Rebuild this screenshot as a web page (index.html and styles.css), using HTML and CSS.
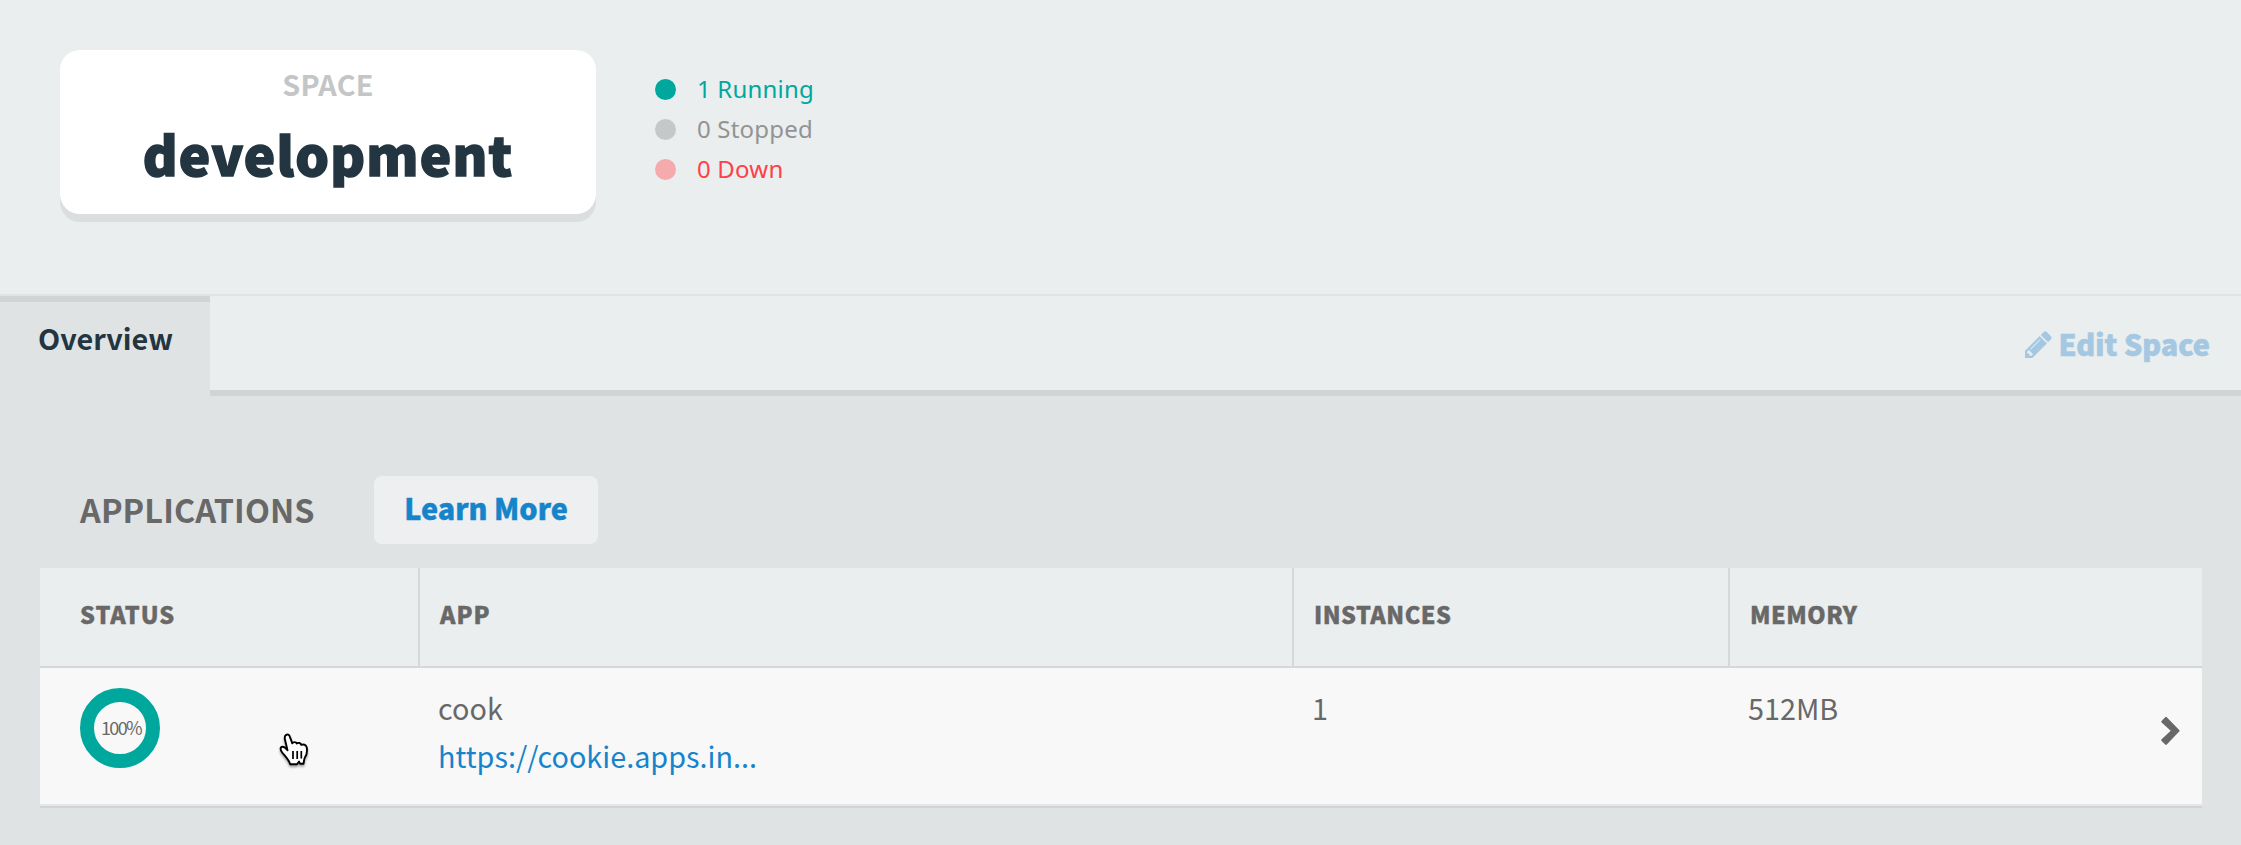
FILE: index.html
```html
<!DOCTYPE html>
<html lang="en">
<head>
<meta charset="utf-8">
<title>development</title>
<link rel="stylesheet" href="styles.css">
</head>
<body>
<header class="space-header">
  <div class="space-card">
    <span class="space-label">SPACE</span>
    <h1 class="space-name">development</h1>
  </div>
  <ul class="status-list">
    <li class="status running"><i class="dot"></i><span>1 Running</span></li>
    <li class="status stopped"><i class="dot"></i><span>0 Stopped</span></li>
    <li class="status down"><i class="dot"></i><span>0 Down</span></li>
  </ul>
</header>
<nav class="tabs">
  <a class="tab">Overview</a>
  <div class="tab-rest">
    <a class="edit"><svg class="pencil" viewBox="0 0 1536 1536"><path fill="currentColor" d="M363 1408l91-91-235-235-91 91v107h128v128h107zM886 480q0-22-22-22-10 0-17 7l-542 542q-7 7-7 17 0 22 22 22 10 0 17-7l542-542q7-7 7-17zM832 288l416 416-832 832H0v-416zM1515 384q0 53-37 90l-166 166-416-416 166-165q36-38 90-38 53 0 91 38l235 234q37 39 37 91z"/></svg><span>Edit Space</span></a>
  </div>
</nav>
<main class="content">
  <div class="section-head">
    <h2 class="section-title">APPLICATIONS</h2>
    <a class="learn"><span>Learn More</span></a>
  </div>
  <div class="table">
    <div class="row head">
      <div class="th th-status">STATUS</div>
      <div class="th th-app">APP</div>
      <div class="th th-inst">INSTANCES</div>
      <div class="th th-mem">MEMORY</div>
    </div>
    <div class="row body">
      <div class="td td-status"><div class="ring"><span>100%</span></div></div>
      <div class="td td-app"><span class="app-name">cook</span><a class="app-url">https://cookie.apps.in...</a></div>
      <div class="td td-inst">1</div>
      <div class="td td-mem">512MB</div>
      <svg class="chevron" viewBox="0 0 19 30"><path fill="currentColor" d="M.6 4.9 4.2 1.2Q5 .4 5.8 1.2L18.2 13.9Q19 14.700 18.200 15.500L5.800 28.500Q5 29.300 4.200 28.500L.6 24.900Q-.2 24.100.6 23.300L9.700 14.700.6 6.500Q-.2 5.700.6 4.900Z"/></svg>
    </div>
  </div>
</main>
<svg class="cursor" viewBox="0 0 32 36"><path d="M7.700 3.300C9.500 1.900 11.300 2.600 11.900 4.800L14.300 11.300C15.500 9.600 18 9.700 18.800 11.500 20.500 10.300 22.800 10.900 23.300 12.900 25.300 12 28 12.600 28.700 15.300 29.500 19.500 28.600 23 26.900 25.500 25.900 27 26 30 25.500 31.800H22.200L21 29.600 19 32.300H12.200C11 28 7 24 4.200 20.500 1.900 17.600 2.100 14.700 4.600 14.700 6.700 14.700 8 16.300 9.500 18.200L7.200 8.500C6.500 6 6.200 4.500 7.700 3.300Z" fill="#fff" stroke="#000" stroke-width="1.900" stroke-linejoin="round"/><path d="M15 19v8M19.200 19v8M23.300 19v7.500" stroke="#000" stroke-width="1.700"/></svg>
</body>
</html>
```
FILE: styles.css
```css
* { box-sizing: border-box; }
body {
  margin: 0;
  width: 2241px;
  height: 845px;
  overflow: hidden;
  background: #dfe3e4;
  color: #686868;
  font-family: "Noto Sans CJK SC", "Noto Sans", sans-serif;
  font-size: 28.8px;
}
h1, h2, ul { margin: 0; padding: 0; }
.space-header {
  display: flex;
  height: 296px;
  padding: 50px 60px 0;
  background: #eaeeef;
  border-bottom: 2px solid #dfe3e4;
}
.space-card {
  display: flex;
  flex-direction: column;
  align-items: center;
  width: 536px;
  height: 164px;
  border-radius: 20px;
  background: #fff;
  box-shadow: 0 8px 0 #dadedf;
}
.space-label {
  margin-top: 14px;
  line-height: 40px;
  font-weight: 700;
  letter-spacing: .2px;
  color: #c4c5c7;
}
.space-name {
  line-height: 64px;
  margin-top: 17px;
  font-size: 53px;
  font-weight: 900;
  letter-spacing: 1.150px;
  -webkit-text-stroke: 1.500px currentColor;
  color: #233540;
}
.status-list {
  display: flex;
  flex-direction: column;
  list-style: none;
  margin: 19px 0 0 59px;
  font-family: "Noto Sans", sans-serif;
  font-size: 24px;
  letter-spacing: .2px;
}
.status { display: flex; align-items: center; gap: 21px; height: 40px; line-height: 40px; }
.dot { width: 21px; height: 21px; border-radius: 50%; }
.running { color: #00a79d; }
.running .dot { background: #00a79d; }
.stopped { color: #939393; }
.stopped .dot { background: #c4c8c9; }
.down { color: #ff4048; }
.down .dot { background: #f5abad; }
.tabs { display: flex; height: 100px; }
.tab {
  width: 210px;
  padding-left: 38px;
  border-top: 6px solid #d0d4d5;
  background: #dfe3e4;
  line-height: 71px;
  font-weight: 700;
  color: #233540;
}
.tab-rest {
  flex: 1;
  display: flex;
  justify-content: flex-end;
  padding-right: 31px;
  background: #eaeeef;
  border-bottom: 6px solid #d0d4d5;
}
.edit {
  display: flex;
  align-items: center;
  height: 96px;
  gap: 7px;
  font-weight: 900;
  line-height: 96px;
  -webkit-text-stroke: .6px currentColor;
  color: #a5c8e2;
}
.pencil { width: 27px; height: 27px; margin-right: -1px; stroke: none; -webkit-text-stroke: 0; }
.content { padding: 80px 39px 0 40px; }
.section-head { display: flex; align-items: center; height: 68px; padding-left: 40px; }
.section-title { width: 294px; font-size: 32.4px; line-height: 66px; font-weight: 700; letter-spacing: .12px; margin-top: -3px; }
.learn {
  width: 224px;
  height: 68px;
  border-radius: 8px;
  background: #edeff1;
  color: #1684cb;
  font-weight: 900;
  -webkit-text-stroke: .4px currentColor;
  text-align: center;
  line-height: 64px;
}
.table { margin-top: 24px; }
.row { display: flex; }
.head { height: 100px; background: #eaeeef; border-bottom: 2px solid #d3d8d8; }
.th {
  padding-left: 20px;
  border-left: 2px solid #d3d8d8;
  font-size: 23.4px;
  font-weight: 900;
  -webkit-text-stroke: .4px currentColor;
  letter-spacing: 1px;
  line-height: 93px;
}
.th-status { width: 378px; padding-left: 40px; border-left: 0; }
.th-app { width: 874px; }
.th-inst { width: 436px; letter-spacing: .5px; }
.th-mem { flex: 1; letter-spacing: .5px; }
.body {
  position: relative;
  height: 140px;
  background: #f8f8f8;
  border-bottom: 2px solid #d0d4d5;
  box-shadow: inset 0 -2px #e6e8e8;
}
.td { line-height: 48px; padding-top: 16px; }
.td-status { width: 398px; padding: 20px 0 0 40px; }
.ring {
  display: flex;
  justify-content: center;
  width: 80px;
  height: 80px;
  padding-left: 2px;
  border: 14px solid #00a79d;
  border-radius: 50%;
  font-size: 18px;
  letter-spacing: -1.600px;
  line-height: 51px;
}
.td-app { display: flex; flex-direction: column; width: 874px; }
.app-url { color: #1684cb; }
.td-inst { width: 436px; }
.td-mem { flex: 1; }
.chevron { width: 19px; height: 30px; margin: 48px 22px 0 0; }
.cursor { position: absolute; left: 278px; top: 732px; width: 32px; height: 36px; filter: drop-shadow(0 2px 1px rgba(0,0,0,.35)); }
```
